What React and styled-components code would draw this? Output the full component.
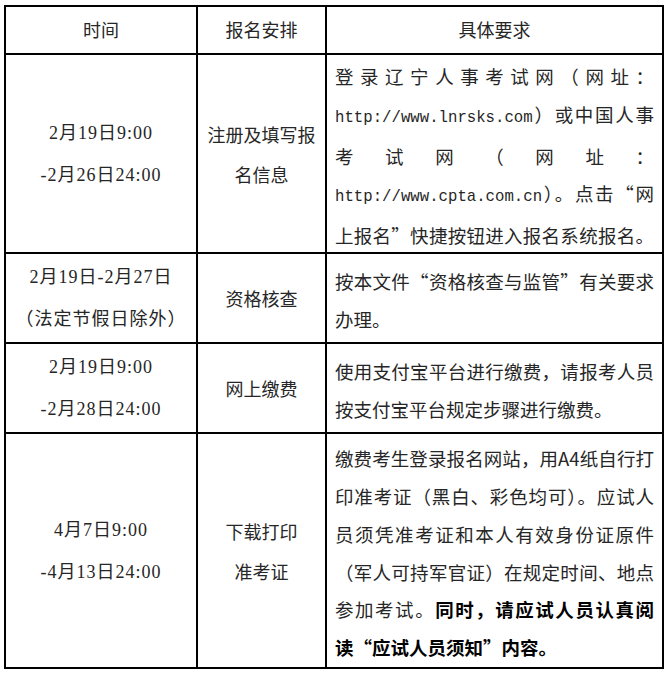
import React from 'react'
import styled, { createGlobalStyle } from 'styled-components'

const GlobalStyle = createGlobalStyle`
  body{
    margin: 0;
    background: #fff;
  }
`

const Page = styled.div`
  padding: 5px 0 0 4px;
`

const Table = styled.div`
  display: grid;
  grid-template-columns: 190px 127px 335px;
  grid-template-rows: ${({rows}) => rows};
  gap: 2px;
  padding: 2px;
  width: max-content;
  background: #000;
  color: #262626;
  font-family: "Noto Sans CJK SC", sans-serif;
  font-size: 18px;
`

const Cell = styled.div`
  background: #fff;
  display: flex;
  flex-direction: column;
  justify-content: center;
`

const HeadCell = styled(Cell)`
  align-items: center;
  padding-bottom: 2px;
`

const TimeCell = styled(Cell)`
  align-items: center;
  font-family: "Liberation Serif", "Noto Sans CJK SC", serif;
  letter-spacing: 1px;
  line-height: 42px;
`

const ItemCell = styled(Cell)`
  align-items: center;
  line-height: 40px;
`

const ReqCell = styled(Cell)`
  padding: 6px 8px 0 8px;
  font-size: 18.5px;
  line-height: 37.7px;
`

const Line = styled.div`
  text-align: justify;
  text-align-last: ${({last}) => last ? 'left' : 'justify'};
`

const Url = styled.span`
  font-family: "Liberation Mono", monospace;
  font-size: 15.7px;
`

const Strong = styled.span`
  font-weight: 700;
  color: #000;
`

const rows = [
  {
    height: 197,
    time: ['2月19日9:00', '-2月26日24:00'],
    item: ['注册及填写报', '名信息'],
    req: [
      <>登录辽宁人事考试网（网址：</>,
      <><Url>http://www.lnrsks.com</Url>）或中国人事</>,
      <>考试网（网址：</>,
      <><Url>http://www.cpta.com.cn</Url>）。点击“网</>,
      <>上报名”快捷按钮进入报名系统报名。</>,
    ],
    justifyLast: true,
  },
  {
    height: 88,
    time: ['2月19日-2月27日', '（法定节假日除外）'],
    item: ['资格核查'],
    req: [
      <>按本文件“资格核查与监管”有关要求</>,
      <>办理。</>,
    ],
  },
  {
    height: 88,
    time: ['2月19日9:00', '-2月28日24:00'],
    item: ['网上缴费'],
    req: [
      <>使用支付宝平台进行缴费，请报考人员</>,
      <>按支付宝平台规定步骤进行缴费。</>,
    ],
  },
  {
    height: 233,
    time: ['4月7日9:00', '-4月13日24:00'],
    item: ['下载打印', '准考证'],
    req: [
      <>缴费考生登录报名网站，用A4纸自行打</>,
      <>印准考证（黑白、彩色均可）。应试人</>,
      <>员须凭准考证和本人有效身份证原件</>,
      <>（军人可持军官证）在规定时间、地点</>,
      <>参加考试。<Strong>同时，请应试人员认真阅</Strong></>,
      <><Strong>读“应试人员须知”内容。</Strong></>,
    ],
  },
]

const App = () => {
  const template = ['46px', ...rows.map(r => r.height + 'px')].join(' ')
  return (
    <Page>
      <GlobalStyle/>
      <Table rows={template}>
        <HeadCell>时间</HeadCell>
        <HeadCell>报名安排</HeadCell>
        <HeadCell>具体要求</HeadCell>
        {
          rows.map((row, i) => (
            <React.Fragment key={i}>
              <TimeCell>
                {row.time.map((t, j) => <div key={j}>{t}</div>)}
              </TimeCell>
              <ItemCell>
                {row.item.map((t, j) => <div key={j}>{t}</div>)}
              </ItemCell>
              <ReqCell>
                {row.req.map((t, j) => (
                  <Line key={j} last={j === row.req.length - 1 && !row.justifyLast}>{t}</Line>
                ))}
              </ReqCell>
            </React.Fragment>
          ))
        }
      </Table>
    </Page>
  )
}

export default App
